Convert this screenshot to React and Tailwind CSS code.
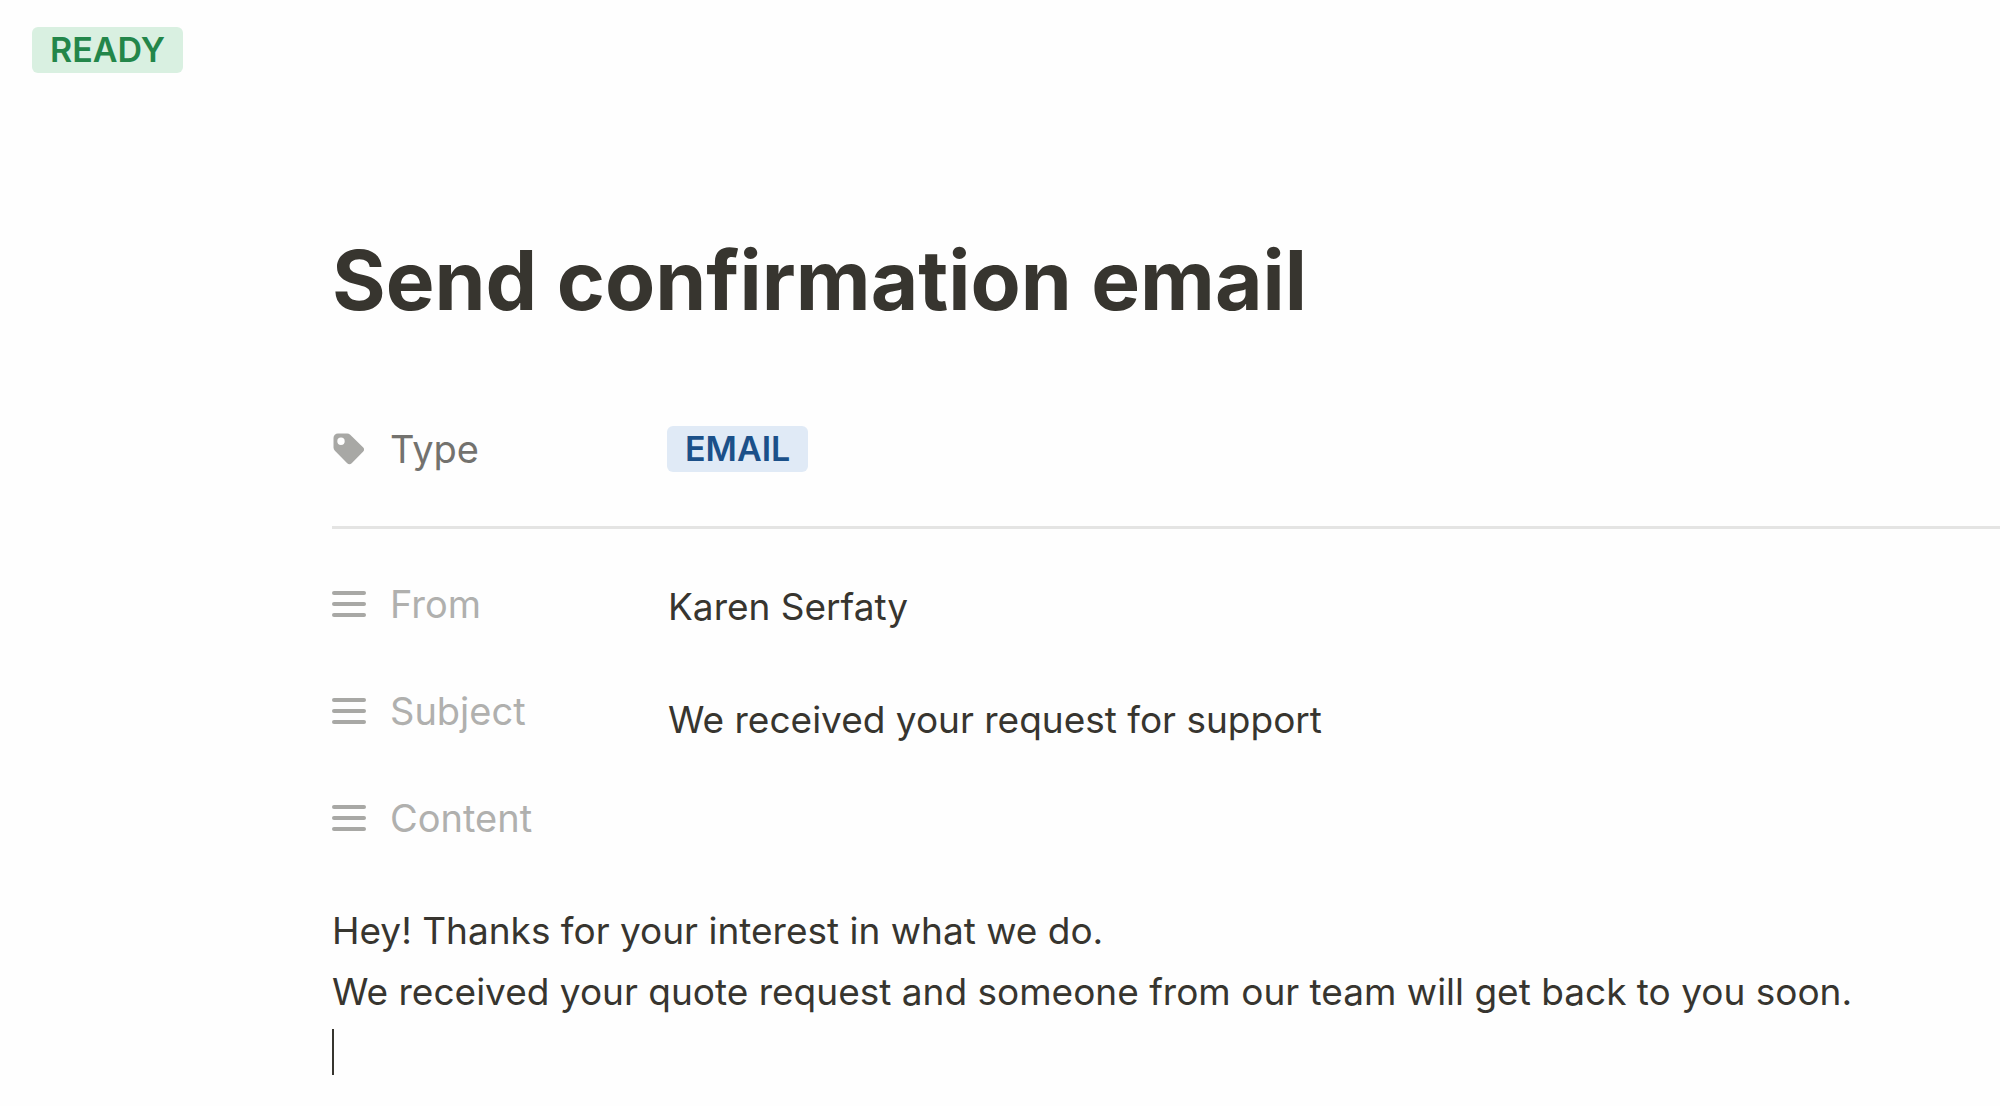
function TagIcon() {
  return (
    <svg width="32" height="32" viewBox="0 0 32 32" fill="#a8a8a5" aria-hidden="true">
      <path
        fillRule="evenodd"
        d="M1.500 5a4.500 4.500 0 0 1 4.500-4.500H15a4.500 4.500 0 0 1 3.200 1.300L31 14.300a3.200 3.200 0 0 1 0 4.500L19.700 30.200a3.200 3.200 0 0 1-4.500 0L2.900 17.700A4.500 4.500 0 0 1 1.500 14.500ZM9 4.500a3.700 3.700 0 1 0 0 7.400a3.700 3.700 0 1 0 0-7.400Z"
      />
    </svg>
  );
}

function LinesIcon() {
  return (
    <svg width="34" height="28" viewBox="0 0 34 28" fill="#a8a8a5" aria-hidden="true">
      <rect x="0" y="1" width="34" height="4" rx="2" />
      <rect x="0" y="12" width="34" height="4" rx="2" />
      <rect x="0" y="23" width="34" height="4" rx="2" />
    </svg>
  );
}

function Badge({ className, children }) {
  return (
    <span className={`inline-flex h-[46px] items-center rounded-md px-[18px] text-[34px] leading-none font-semibold ${className}`}>
      {children}
    </span>
  );
}

function Property({ label, value, valueClass }) {
  return (
    <div className="flex h-[107px] items-start">
      <dt className="flex h-14 w-[336px] items-center text-[#b0b0ae]">
        <span className="flex w-[58px]">
          <LinesIcon />
        </span>
        {label}
      </dt>
      <dd className={`text-[37px] leading-[56px] ${valueClass}`}>{value}</dd>
    </div>
  );
}

export default function App() {
  return (
    <main className="min-h-screen overflow-x-hidden bg-[#fefefe] font-['Inter',sans-serif] text-[38px] text-[#37352f]">
      <header className="flex px-8 pt-[27px]">
        <Badge className="bg-[#d9f0e1] text-[#23864a]">READY</Badge>
      </header>

      <article className="pl-[332px]">
        <h1 className="mt-[158px] text-[82px] leading-[100px] font-bold">Send confirmation email</h1>

        <dl className="mt-[90px] flex h-14 items-center">
          <dt className="flex w-[335px] items-center text-[#73726e]">
            <span className="flex w-[58px]">
              <TagIcon />
            </span>
            Type
          </dt>
          <dd className="flex">
            <Badge className="bg-[#e0eaf6] text-[#1b5089]">EMAIL</Badge>
          </dd>
        </dl>

        <hr className="mt-[49px] border-t-3 border-[#e4e4e3]" />

        <dl className="mt-[47px]">
          <Property label="From" value="Karen Serfaty" valueClass="pt-[3px]" />
          <Property label="Subject" value="We received your request for support" valueClass="pt-[9px]" />
          <Property label="Content" value="" valueClass="" />
        </dl>

        <div className="mt-[3px] pb-3 text-[37px] leading-[61px]">
          <p>Hey! Thanks for your interest in what we do.</p>
          <p>We received your quote request and someone from our team will get back to you soon.</p>
          <div className="flex h-[60px] items-center">
            <span className="h-[46px] w-[2px] bg-[#37352f]" />
          </div>
        </div>
      </article>
    </main>
  );
}
